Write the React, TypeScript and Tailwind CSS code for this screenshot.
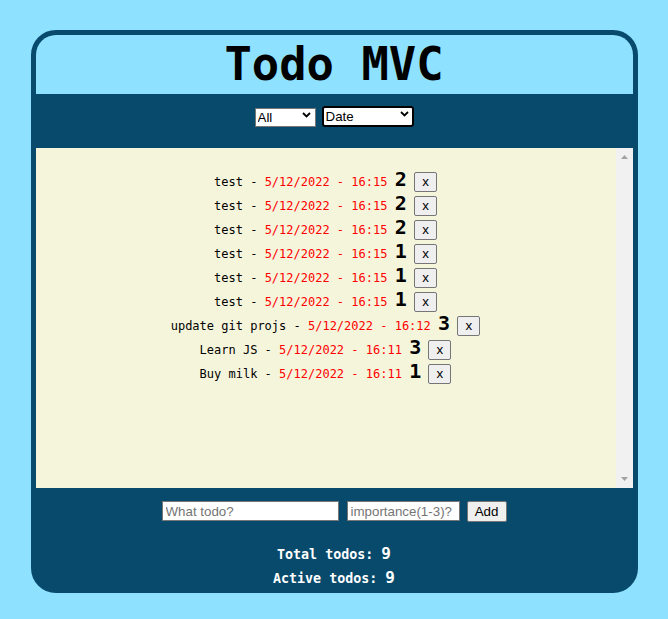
import React from "react";

const items = [
  { t: "test", d: "5/12/2022 - 16:15", n: 2 },
  { t: "test", d: "5/12/2022 - 16:15", n: 2 },
  { t: "test", d: "5/12/2022 - 16:15", n: 2 },
  { t: "test", d: "5/12/2022 - 16:15", n: 1 },
  { t: "test", d: "5/12/2022 - 16:15", n: 1 },
  { t: "test", d: "5/12/2022 - 16:15", n: 1 },
  { t: "update git projs", d: "5/12/2022 - 16:12", n: 3 },
  { t: "Learn JS", d: "5/12/2022 - 16:11", n: 3 },
  { t: "Buy milk", d: "5/12/2022 - 16:11", n: 1 },
];

function Chevron() {
  return (
    <svg width="9" height="6" viewBox="0 0 9 6" className="pointer-events-none absolute right-[5px] top-[7px]">
      <polyline points="1,1 4.5,4.5 8,1" fill="none" stroke="#000" strokeWidth="1.8" />
    </svg>
  );
}

export default function App() {
  return (
    <div className="h-[619px] bg-[#8ee1ff] pt-[30px] font-['Liberation_Sans',Arial,sans-serif]">
      <div className="mx-auto flex h-[563px] w-[607px] flex-col overflow-hidden rounded-[25px] border-[5px] border-[#084a6b] bg-[#084a6b]">
        <div className="flex h-[59px] shrink-0 items-center justify-center bg-[#8ee1ff]">
          <h1 className="font-['DejaVu_Sans_Mono',monospace] text-[45.5px] font-bold leading-none text-black">
            Todo MVC
          </h1>
        </div>
        <div className="flex h-[54px] shrink-0 items-start justify-center gap-[6px] bg-[#084a6b] pt-[10px]">
          <div className="relative mt-[1px]">
            <select className="h-[19px] w-[61px] appearance-none border border-[#767676] bg-white pl-[2px] text-[13.33px] leading-none text-black outline-none">
              <option>All</option>
            </select>
            <Chevron />
          </div>
          <div className="relative">
            <select className="h-[21px] w-[92px] appearance-none rounded-[3px] border-2 border-black bg-white pl-[2px] text-[13.33px] leading-none text-black outline-none">
              <option>Date</option>
            </select>
            <Chevron />
          </div>
        </div>
        <div className="flex h-[340px] shrink-0 bg-[#f5f5dc]">
          <ul className="flex-1 pt-[19px] text-center font-['DejaVu_Sans_Mono',monospace] text-[12px] text-black">
            {items.map((it, i) => (
              <li key={i} className="h-[24px] leading-[24px]">
                {it.t} - <span className="text-[#ff0000]">{it.d}</span>{" "}
                <span className="text-[20px] font-bold">{it.n}</span>{" "}
                <button className="h-[20px] w-[23px] rounded-[2px] border border-[#767676] bg-[#efefef] font-['Liberation_Sans',Arial,sans-serif] text-[13.33px] leading-none text-black">
                  x
                </button>
              </li>
            ))}
          </ul>
          <div className="flex w-[17px] flex-col items-center justify-between bg-[#f1f1f1] pb-[7px] pt-[7px]">
            <svg width="7" height="4" viewBox="0 0 7 4">
              <polygon points="0,4 3.5,0 7,4" fill="#a3a3a3" />
            </svg>
            <svg width="7" height="4" viewBox="0 0 7 4">
              <polygon points="0,0 7,0 3.5,4" fill="#a3a3a3" />
            </svg>
          </div>
        </div>
        <div className="flex-1 bg-[#084a6b] pt-[13px]">
          <div className="flex items-start justify-center">
            <input
              placeholder="What todo?"
              className="h-[20px] w-[177px] border border-[#767676] bg-white px-[3px] text-[13.33px] text-black outline-none placeholder:text-[#757575]"
            />
            <input
              placeholder="importance(1-3)?"
              className="ml-[8px] h-[20px] w-[113px] border border-[#767676] bg-white px-[3px] text-[13.33px] text-black outline-none placeholder:text-[#757575]"
            />
            <button className="ml-[7px] h-[21px] w-[40px] rounded-[2px] border border-[#767676] bg-[#efefef] text-[13.33px] leading-none text-black">
              Add
            </button>
          </div>
          <div className="mt-[20px] text-center font-['DejaVu_Sans_Mono',monospace] text-[13.33px] font-bold text-white">
            <div className="leading-[23px]">
              Total todos: <span className="text-[16px]">9</span>
            </div>
            <div className="leading-[23px]">
              Active todos: <span className="text-[16px]">9</span>
            </div>
          </div>
        </div>
      </div>
    </div>
  );
}
